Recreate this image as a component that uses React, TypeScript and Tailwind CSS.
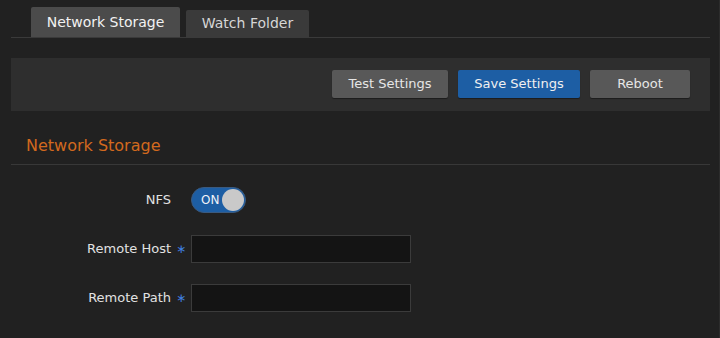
import React from "react";

export default function App() {
  const font = { fontFamily: '"DejaVu Sans", Verdana, sans-serif' };
  return (
    <div
      className="w-[720px] h-[338px] bg-[#212121] border-r border-[#2c2c2c] text-[#e2e2e2] overflow-hidden"
      style={font}
    >
      <div className="ml-[11px] mr-[9px] pt-[7px]">
        {/* Tabs */}
        <div className="flex items-end gap-[6px] pl-[20px] border-b border-[#3a3a3a]">
          <div className="h-[30px] w-[149px] bg-[#4b4b4b] rounded-t-[2px] flex items-center justify-center text-[14px] text-[#f2f2f2]">
            Network Storage
          </div>
          <div className="h-[27px] w-[123px] bg-[#3a3a3a] rounded-t-[2px] flex items-center justify-center text-[14px] text-[#d6d6d6]">
            Watch Folder
          </div>
        </div>

        {/* Toolbar */}
        <div className="mt-[20px] h-[53px] bg-[#2e2e2e] flex items-start justify-end gap-[10px] pt-[12px] pr-[20px]">
          <button className="h-[28px] w-[116px] bg-[#585858] rounded-[2px] text-[13px] text-[#e6e6e6] shadow-[0_1px_1px_rgba(0,0,0,0.4)]">
            Test Settings
          </button>
          <button className="h-[28px] w-[122px] bg-[#1d5ea4] rounded-[2px] text-[13px] text-[#f0f0f0] shadow-[0_1px_1px_rgba(0,0,0,0.4)]">
            Save Settings
          </button>
          <button className="h-[28px] w-[100px] bg-[#585858] rounded-[2px] text-[13px] text-[#e6e6e6] shadow-[0_1px_1px_rgba(0,0,0,0.4)]">
            Reboot
          </button>
        </div>

        {/* Section heading */}
        <div className="mt-[24px] pl-[15px] pb-[8px] border-b border-[#383838] text-[16px] leading-[21px] text-[#d2691e]">
          Network Storage
        </div>

        {/* Form */}
        <div className="pt-[21px] flex flex-col gap-[21px]">
          <div className="flex items-center h-[28px]">
            <div className="w-[160px] text-right text-[13px]">NFS</div>
            <div className="w-[20px]" />
            <div className="relative w-[55px] h-[26px] rounded-full bg-[#1d5ea4] border border-[#3a5a80] flex items-center">
              <span className="pl-[9px] text-[12px] text-[#eef2f8]">ON</span>
              <span className="absolute right-[1px] top-[1px] w-[22px] h-[22px] rounded-full bg-[#c9c9c9]" />
            </div>
          </div>
          <div className="flex items-center h-[28px]">
            <div className="w-[160px] text-right text-[13px]">Remote Host</div>
            <div className="w-[20px] pl-[5px] text-[12px] text-[#3f7fe0] leading-none">∗</div>
            <input
              className="w-[220px] h-[28px] bg-[#141414] border border-[#3b3b3b] outline-none"
              type="text"
            />
          </div>
          <div className="flex items-center h-[28px]">
            <div className="w-[160px] text-right text-[13px]">Remote Path</div>
            <div className="w-[20px] pl-[5px] text-[12px] text-[#3f7fe0] leading-none">∗</div>
            <input
              className="w-[220px] h-[28px] bg-[#141414] border border-[#3b3b3b] outline-none"
              type="text"
            />
          </div>
        </div>
      </div>
    </div>
  );
}
